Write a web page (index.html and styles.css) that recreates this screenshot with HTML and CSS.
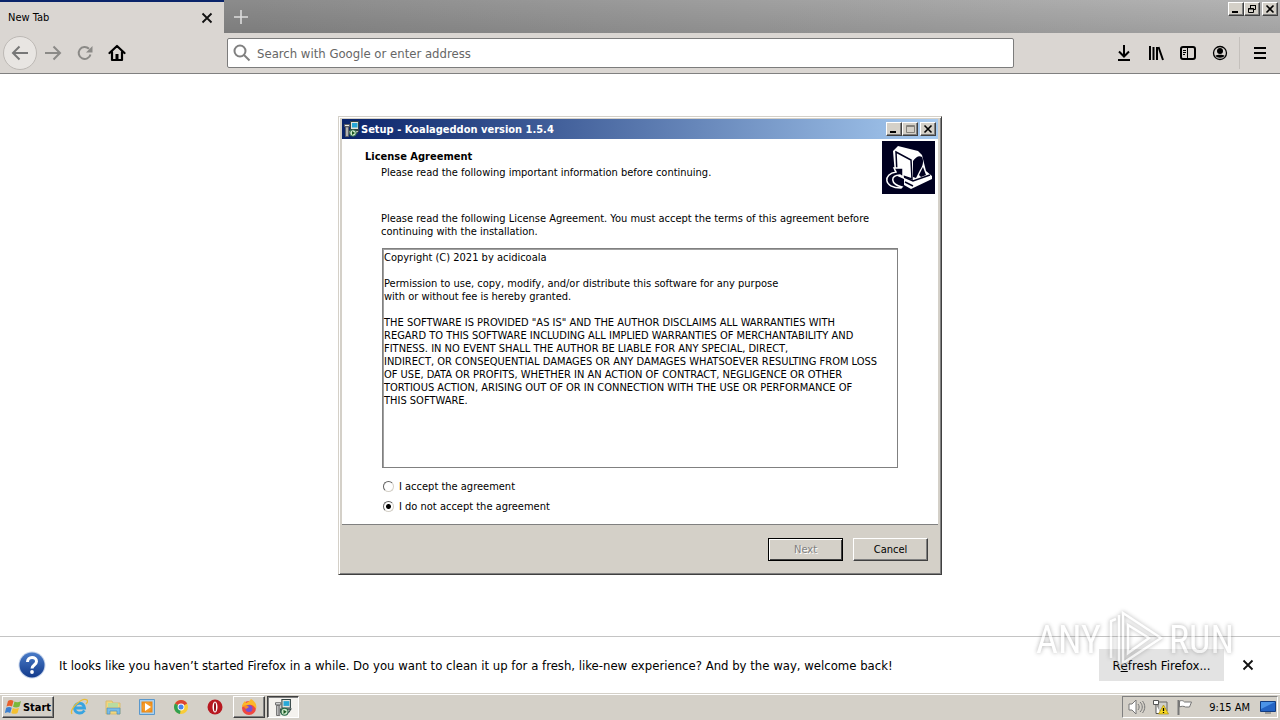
FILE: index.html
```html
<!DOCTYPE html>
<html lang="en">
<head>
  <meta charset="UTF-8" />
  <title>New Tab</title>
  <link rel="stylesheet" href="styles.css">
</head>
<body>

  <!-- shared drawings -->
  <svg class="defs" aria-hidden="true">
    <symbol id="setup-icon" viewBox="0 0 16 16">
      <path d="M6.500 .500h8v8h-8z" fill="#e4e4dc" stroke="#344"/>
      <path d="M8 2h5.500v4.500H8z" fill="#28a8d8"/>
      <path d="M5 9.500h10l-2 3H5z" fill="#d8d8d0" stroke="#344"/>
      <path d="M.5 3.500h5v2h-5zM1.500 6h3v9.500h-3z" fill="#eee" stroke="#555" stroke-width=".8"/>
      <path d="M3 6v9" stroke="#777"/>
      <circle cx="9" cy="12" r="3.300" fill="#cde8c8" stroke="#264"/>
      <path d="M8 10l3 2-3 2z" fill="#185820"/>
    </symbol>
    <symbol id="close-icon" viewBox="0 0 12 12">
      <path d="M1.500 1.500l9 9M10.500 1.500l-9 9" fill="none" stroke="#111" stroke-width="1.800"/>
    </symbol>
  </svg>

  <div class="browser">
    <div class="tabstrip">
      <div class="tab">
        <span>New Tab</span>
        <button class="icon-btn" aria-label="Close tab"><svg width="12" height="12"><use href="#close-icon"/></svg></button>
      </div>
      <button class="icon-btn new-tab" aria-label="New tab">
        <svg width="14" height="14" viewBox="0 0 14 14"><path d="M7 0v14M0 7h14" stroke="#ddd" stroke-width="1.600"/></svg>
      </button>
      <div class="win-buttons">
        <button class="win-btn" aria-label="Minimize"><svg width="12" height="10" viewBox="0 0 12 10"><path d="M2 7h6v2H2z"/></svg></button>
        <button class="win-btn" aria-label="Restore"><svg width="12" height="10" viewBox="0 0 12 10"><path d="M4.500 4V1.500h5v4H8M4 1.500h6M2.500 4.500h5v4h-5zM2 5h6" fill="none" stroke="#000"/></svg></button>
        <button class="win-btn win-close" aria-label="Close"><svg width="12" height="10" viewBox="0 0 12 10"><path d="M2.500 1.500l7 7M9.500 1.500l-7 7" stroke="#000" stroke-width="1.600"/></svg></button>
      </div>
    </div>

    <div class="toolbar">
      <div class="nav">
        <button class="icon-btn nav-back" aria-label="Back"><svg width="18" height="16" viewBox="0 0 18 16"><path d="M17 8H2M8.500 1.500L2 8l6.500 6.500" fill="none" stroke="#777" stroke-width="2"/></svg></button>
        <button class="icon-btn nav-btn" aria-label="Forward"><svg width="18" height="16" viewBox="0 0 18 16"><path d="M1 8h15M9.500 1.500L16 8l-6.500 6.500" fill="none" stroke="#8b8a87" stroke-width="2"/></svg></button>
        <button class="icon-btn nav-btn" aria-label="Reload"><svg width="16" height="16" viewBox="0 0 16 16"><path d="M13.500 9.500A6 6 0 1 1 12 3.800" fill="none" stroke="#8b8a87" stroke-width="2"/><path d="M15.500 1v6.500H9z" fill="#8b8a87"/></svg></button>
        <button class="icon-btn nav-btn" aria-label="Home"><svg width="18" height="18" viewBox="0 0 18 18"><path d="M1.500 9L9 2l7.500 7M4 8v8h10V8" fill="none" stroke="#000" stroke-width="2.200" stroke-linejoin="round" stroke-linecap="round"/><path d="M7.500 10h3v6h-3z"/></svg></button>
      </div>
      <label class="urlbar">
        <svg width="18" height="18" viewBox="0 0 18 18"><circle cx="7" cy="7" r="5.500" fill="none" stroke="#808080" stroke-width="2"/><path d="M10.500 10.500l6 6" stroke="#808080" stroke-width="2"/></svg>
        <input type="text" placeholder="Search with Google or enter address" aria-label="Search with Google or enter address" />
      </label>
      <div class="tools">
        <button class="icon-btn tool" aria-label="Downloads"><svg width="16" height="16" viewBox="0 0 16 16"><path d="M8 0v11M3 6.500l5 5 5-5M2 15h12" fill="none" stroke="#000" stroke-width="2"/></svg></button>
        <button class="icon-btn tool" aria-label="Library"><svg width="16" height="16" viewBox="0 0 16 16"><path d="M2 1v14M5.500 2v13M9 2v13M10.500 2l4.500 13" fill="none" stroke="#000" stroke-width="2"/></svg></button>
        <button class="icon-btn tool" aria-label="Sidebars"><svg width="16" height="16" viewBox="0 0 16 16"><rect x="1" y="2" width="14" height="12" rx="2" fill="none" stroke="#000" stroke-width="2"/><path d="M7.500 2v12M3 5.500h3M3 7.500h3M3 9.500h2" stroke="#000"/></svg></button>
        <button class="icon-btn tool" aria-label="Account"><svg width="16" height="16" viewBox="0 0 16 16"><circle cx="8" cy="8" r="6.500" fill="none" stroke="#000" stroke-width="1.300"/><circle cx="8" cy="6" r="3"/><path d="M3.500 10.500c2-1 7-1 9 0-1 3-8 3-9 0z"/></svg></button>
        <button class="icon-btn menu" aria-label="Menu"><svg width="12" height="14" viewBox="0 0 12 14"><path d="M0 2h12M0 7h12M0 12h12" stroke="#000" stroke-width="2"/></svg></button>
      </div>
    </div>

    <main class="page"></main>

    <div class="notice">
      <svg width="28" height="28" viewBox="0 0 28 28">
        <defs><linearGradient id="help" x2="0" y2="1"><stop stop-color="#4a7cc8"/><stop offset="1" stop-color="#123a8c"/></linearGradient></defs>
        <circle cx="14" cy="14" r="13.500" fill="#c5d3ea"/><circle cx="14" cy="14" r="12.500" fill="url(#help)"/>
        <path d="M9.500 11c0-6 9-6 9-.5 0 3.500-4.500 3.500-4.500 7" fill="none" stroke="#fff" stroke-width="3"/><circle cx="14" cy="21" r="1.900" fill="#fff"/>
      </svg>
      <p>It looks like you haven’t started Firefox in a while. Do you want to clean it up for a fresh, like-new experience? And by the way, welcome back!</p>
      <button class="refresh">R<u>e</u>fresh Firefox...</button>
      <button class="icon-btn" aria-label="Dismiss"><svg width="12" height="12"><use href="#close-icon"/></svg></button>
    </div>
  </div>

  <div class="taskbar">
    <button class="start">
      <svg width="18" height="16" viewBox="0 0 18 16">
        <path d="M3 2c2-1.500 4-1 5.500 0L7 7.500C5.500 6.500 3.500 6.500 1.500 7.500z" fill="#e8602c"/>
        <path d="M9.500 2.500c2 1 4 1 6.500-.5l-1.500 5.500c-2 1.300-4.500 1.300-6.500.3z" fill="#7ab83c"/>
        <path d="M1.200 8.800c2-1.200 4-1 5.500 0L5.200 14C3.500 13 2 13-.2 14z" fill="#3c80d0"/>
        <path d="M7.800 9c2 1 4 1 6.200-.2L12.500 14c-2 1.300-4.500 1-6.200 0z" fill="#f4c030"/>
      </svg>
      Start
    </button>
    <div class="launch">
      <button class="task" aria-label="Internet Explorer"><svg width="18" height="18" viewBox="0 0 18 18"><path d="M14.500 12.500c-3 4-10 3-10-2.500s9-7 10 0H5" fill="none" stroke="#38a4e0" stroke-width="2.800"/><path d="M2 16C-1 11 12-1 17 2c1 1 0 3-1 4" fill="none" stroke="#e8bc38" stroke-width="1.300"/></svg></button>
      <button class="task" aria-label="Explorer"><svg width="18" height="18" viewBox="0 0 18 18"><path d="M2 3h6l1 2h7v11H2z" fill="#f2d67c" stroke="#d8bc70"/><path d="M4 5h10v4H4z" fill="#b8dca0"/><path d="M3 10h13v6h-3v-3H6v3H3z" fill="#78bce8" stroke="#4c90c0" stroke-width=".7"/></svg></button>
      <button class="task" aria-label="Media Player"><svg width="18" height="18" viewBox="0 0 18 18"><path d="M1.500 1.500h15v15h-15z" fill="#a8d0f0" stroke="#5a98cc"/><path d="M3.500 3.500h11v11h-11z" fill="#ec8a18"/><circle cx="9" cy="9" r="5" fill="#f49a28"/><path d="M7 5l6 4-6 4z" fill="#fff"/></svg></button>
      <button class="task" aria-label="Chrome"><svg width="18" height="18" viewBox="0 0 18 18"><circle cx="9" cy="9" r="7" fill="#f8cc38"/><path d="M9 9L3 5.500a7 7 0 0 1 12.200 0z" fill="#dc4434"/><path d="M9 9L3 5.500A7 7 0 0 0 8 16z" fill="#30a050"/><circle cx="9" cy="9" r="3.400" fill="#fff"/><circle cx="9" cy="9" r="2.500" fill="#4884ec"/></svg></button>
      <button class="task" aria-label="Opera"><svg width="18" height="18" viewBox="0 0 18 18"><circle cx="9" cy="9" r="7.500" fill="#b81820"/><ellipse cx="9" cy="9" rx="2.500" ry="5.500" fill="#fff"/><ellipse cx="9" cy="9" rx="1" ry="4.500" fill="#900c14"/></svg></button>
      <button class="task task-open" aria-label="Firefox"><svg width="18" height="18" viewBox="0 0 18 18"><circle cx="9" cy="10" r="7" fill="#f04840"/><path d="M2 9C2 6 4 4 5 3l1 2c3-1 4-3 5-4 5 3 6 7 5 10-2-4-5-5-8-4z" fill="#fcb828"/><circle cx="9" cy="10.500" r="3.500" fill="#7850d0"/><path d="M3 8c3-1 5 0 6 1l-3 2z" fill="#f88c28"/></svg></button>
      <button class="task task-active" aria-label="Setup"><svg width="17" height="17"><use href="#setup-icon"/></svg></button>
    </div>
    <div class="tray">
      <svg width="18" height="16" viewBox="0 0 18 16"><path d="M1 5h3l4-4v14l-4-4H1z" fill="#fff" stroke="#777"/><path d="M10 5c1.500 2 1.500 4 0 6M12 3c3 3 3 7 0 10M14.500 2c3 4 3 8 0 12" fill="none" stroke="#777"/></svg>
      <svg width="18" height="16" viewBox="0 0 18 16"><path d="M6 3h9v9H6z" fill="#d0d0ca" stroke="#666"/><path d="M1.500 1.500h5v4h-5zM4 5.500v9h5" fill="#fff" stroke="#555"/><path d="M11.500 6l5 9h-10z" fill="#f8d820" stroke="#a88c10" stroke-width=".7"/><path d="M11.500 9v3M11.500 13v1" stroke="#000" stroke-width="1.300"/></svg>
      <svg width="18" height="16" viewBox="0 0 18 16"><path d="M2.500 1v15" stroke="#777" stroke-width="2"/><path d="M3.500 2c3-1 4 0 5 1h7l-2 5h-4c-2-1-4-1-6 0z" fill="#fff" stroke="#777"/></svg>
      <time>9:15 AM</time>
      <svg width="16" height="14" viewBox="0 0 16 14"><path d="M.500 1.500h15v10H.500z" fill="#2464c4" stroke="#123c80"/><path d="M1 2h14L1 9z" fill="#4c94e8"/><path d="M5 13h6" stroke="#666"/></svg>
    </div>
  </div>

  <form class="dialog">
    <div class="titlebar">
      <svg width="16" height="16"><use href="#setup-icon"/></svg>
      <span>Setup - Koalageddon version 1.5.4</span>
      <div class="dialog-buttons">
        <button type="button" class="win-btn" aria-label="Minimize"><svg width="12" height="10" viewBox="0 0 12 10"><path d="M2 7h6v2H2z"/></svg></button>
        <button type="button" class="win-btn" aria-label="Maximize" disabled><svg width="12" height="10" viewBox="0 0 12 10"><path d="M2.500 1.500h8v7h-8zM2 2.500h9" fill="none" stroke="#85827c"/></svg></button>
        <button type="button" class="win-btn win-close" aria-label="Close"><svg width="12" height="10" viewBox="0 0 12 10"><path d="M2.500 1.500l7 7M9.500 1.500l-7 7" stroke="#000" stroke-width="1.600"/></svg></button>
      </div>
    </div>
    <div class="dialog-head">
      <div>
        <h1>License Agreement</h1>
        <p>Please read the following important information before continuing.</p>
      </div>
      <svg width="53" height="53" viewBox="0 0 53 53">
        <path d="M0 0h53v53H0z" fill="#000020"/>
        <path d="M11 10l5-5 20 5 4 4 4 16 6 5v3L29 48l-7-4v-6l-9-4z" fill="#fff"/>
        <path d="M14 11l15 8 1 19-15-5z" fill="#fff" stroke="#000020" stroke-width="1.500"/>
        <path d="M31 20c3-4 6-6 9-4 2 4 1 9-2 13l-4 8-3-1z" fill="#000020"/>
        <path d="M37 34l4-8 3 8-5 2z" fill="#000020"/>
        <path d="M22 36l9 4 17-6M23 41l8 4" fill="none" stroke="#000020" stroke-width="1.500"/>
        <path d="M19 47C1 47 1 33 14 31l-2-4h9v9l-3-2c-10 0-10 9 2 12z" fill="#000020" stroke="#fff" stroke-width="1.500"/>
      </svg>
    </div>
    <div class="dialog-body">
      <label for="license">Please read the following License Agreement. You must accept the terms of this agreement before continuing with the installation.</label>
      <textarea id="license" readonly>
Copyright (C) 2021 by acidicoala

Permission to use, copy, modify, and/or distribute this software for any purpose
with or without fee is hereby granted.

THE SOFTWARE IS PROVIDED "AS IS" AND THE AUTHOR DISCLAIMS ALL WARRANTIES WITH
REGARD TO THIS SOFTWARE INCLUDING ALL IMPLIED WARRANTIES OF MERCHANTABILITY AND
FITNESS. IN NO EVENT SHALL THE AUTHOR BE LIABLE FOR ANY SPECIAL, DIRECT,
INDIRECT, OR CONSEQUENTIAL DAMAGES OR ANY DAMAGES WHATSOEVER RESULTING FROM LOSS
OF USE, DATA OR PROFITS, WHETHER IN AN ACTION OF CONTRACT, NEGLIGENCE OR OTHER
TORTIOUS ACTION, ARISING OUT OF OR IN CONNECTION WITH THE USE OR PERFORMANCE OF
THIS SOFTWARE.</textarea>
      <label class="choice"><input type="radio" name="agree" /> I accept the agreement</label>
      <label class="choice"><input type="radio" name="agree" checked /> I do not accept the agreement</label>
    </div>
    <div class="dialog-foot">
      <button type="button" class="push push-default" disabled>Next</button>
      <button type="button" class="push">Cancel</button>
    </div>
  </form>

  <div class="watermark">
    <span>ANY</span>
    <svg width="58" height="64" viewBox="0 0 58 64"><path d="M5 50V13l5-2M13 56V7M17 5l38 25-38 25zM22 17v28l21-15z" fill="none" stroke="#fff" stroke-width="2.500"/></svg>
    <span>RUN</span>
  </div>

</body>
</html>
```

FILE: styles.css
```css
* {
  box-sizing: border-box;
}
body {
  margin: 0;
  min-height: 100vh;
  display: flex;
  flex-direction: column;
  background: #fff;
  color: #000;
  font: 11px/13px Tahoma, "DejaVu Sans Condensed", "Noto Sans", sans-serif;
}
button, input, textarea {
  font: inherit;
  color: inherit;
}
button {
  display: flex;
  align-items: center;
  justify-content: center;
  padding: 0;
}
svg {
  display: block;
  flex: none;
}
p, h1 {
  margin: 0;
}
.defs {
  position: absolute;
  width: 0;
  height: 0;
}
.icon-btn {
  border: none;
  background: none;
}

/* browser window */
.browser {
  flex: 1;
  display: flex;
  flex-direction: column;
}
.tabstrip {
  display: flex;
  height: 33px;
  background: linear-gradient(rgba(0,0,0,0.02), rgba(0,0,0,0.12)), linear-gradient(to right, #8e8e8e 20%, #b8b8b8);
}
.tab {
  width: 224px;
  display: flex;
  align-items: center;
  justify-content: space-between;
  padding: 0 11px 0 8px;
  background: #dad6d2;
  border-top: 2px solid #0a246a;
}
.new-tab {
  width: 34px;
}
.win-buttons {
  display: flex;
  align-items: flex-start;
  margin-left: auto;
  padding: 2px 2px 0 0;
}
.win-btn {
  width: 16px;
  height: 14px;
  background: #d4d0c8;
  border: 1px solid;
  border-color: #fff #404040 #404040 #fff;
  box-shadow: inset -1px -1px #808080;
}
.win-close {
  margin-left: 2px;
}
.toolbar {
  display: flex;
  align-items: center;
  height: 41px;
  background: #dad6d2;
  border-bottom: 1px solid #808080;
}
.nav {
  width: 227px;
  display: flex;
  align-items: center;
  padding-left: 3px;
}
.nav-back {
  width: 34px;
  height: 34px;
  border: 1px solid #bdb9b5;
  border-radius: 50%;
  background: #e8e5e2;
}
.nav-btn {
  width: 32px;
  height: 32px;
}
.urlbar {
  flex: 1;
  display: flex;
  align-items: center;
  gap: 4px;
  height: 30px;
  padding-left: 5px;
  background: #fff;
  border: 1px solid #7c7c7c;
  border-radius: 2px;
}
.urlbar input {
  flex: 1;
  border: none;
  outline: none;
  background: none;
  font-size: 13px;
}
.urlbar input::placeholder {
  color: #666;
}
.tools {
  display: flex;
  align-items: center;
  width: 266px;
  justify-content: flex-end;
}
.tool {
  width: 32px;
  height: 32px;
}
.menu {
  width: 41px;
  height: 32px;
  margin-left: 3px;
  border-left: 1px solid #c4c0bc;
}
.page {
  flex: 1;
}
.notice {
  display: flex;
  align-items: center;
  height: 57px;
  padding: 0 26px 0 18px;
  border-top: 1px solid #c4c4c4;
  font-size: 13px;
}
.notice p {
  flex: 1;
  margin-left: 13px;
}
.refresh {
  width: 125px;
  height: 32px;
  margin-right: 18px;
  border: none;
  background: #e3e3e3;
}

/* taskbar */
.taskbar {
  display: flex;
  align-items: center;
  height: 27px;
  padding: 0 2px;
  background: #d4d0c8;
  border-top: 1px solid #d4d0c8;
  box-shadow: inset 0 1px #fff;
}
.start, .task-open {
  background: #d4d0c8;
  border: 1px solid;
  border-color: #fff #404040 #404040 #fff;
  box-shadow: inset -1px -1px #808080;
}
.start {
  width: 52px;
  height: 22px;
  font-weight: bold;
}
.launch {
  display: flex;
  gap: 2px;
  margin-left: 9px;
}
.task {
  width: 32px;
  height: 22px;
}
.task:not(.task-open):not(.task-active) {
  border: none;
  background: none;
}
.task-active {
  background: #f4f2ee;
  border: 1px solid;
  border-color: #404040 #fff #fff #404040;
  box-shadow: inset 1px 1px #808080;
}
.tray {
  display: flex;
  align-items: center;
  gap: 6px;
  height: 22px;
  margin-left: auto;
  padding: 0 1px 0 5px;
  border: 1px solid;
  border-color: #808080 #fff #fff #808080;
}
.tray time {
  margin: 0 4px 0 9px;
}

/* setup window */
.dialog {
  position: absolute;
  top: 116px;
  left: 0;
  right: 0;
  width: 604px;
  margin: 0 auto;
  padding: 2px;
  background: #d4d0c8;
  border: 1px solid;
  border-color: #d4d0c8 #404040 #404040 #d4d0c8;
  box-shadow: inset 1px 1px #fff, inset -1px -1px #808080;
}
.titlebar {
  display: flex;
  align-items: center;
  gap: 1px;
  height: 20px;
  margin: 0 1px;
  padding: 0 2px;
  background: linear-gradient(to right, #0a246a, #a6caf0);
  color: #fff;
  font-weight: bold;
}
.dialog-buttons {
  display: flex;
  margin-left: auto;
}
.dialog-head {
  display: flex;
  justify-content: space-between;
  height: 59px;
  margin: 0 1px;
  padding: 2px 3px 0 23px;
  background: #fff;
}
.dialog-head h1 {
  margin: 9px 0 3px;
  font: inherit;
  font-weight: bold;
}
.dialog-head p {
  margin-left: 16px;
}
.dialog-body {
  display: flex;
  flex-direction: column;
  margin: 0 1px;
  padding: 14px 40px 8px 39px;
  background: #fff;
  border-bottom: 1px solid #808080;
}
#license {
  height: 220px;
  margin: 10px 0 8px 1px;
  padding: 2px 1px;
  border: 1px solid #808080;
  box-shadow: inset 1px 1px #a0a0a0;
  resize: none;
  outline: none;
  overflow: hidden;
  white-space: pre;
}
.choice {
  display: flex;
  align-items: center;
  gap: 5px;
  height: 20px;
}
.choice input {
  appearance: none;
  width: 11px;
  height: 11px;
  margin: 0 0 0 2px;
  border: 1px solid;
  border-color: #606060 #d4d0c8 #d4d0c8 #606060;
  border-radius: 50%;
}
.choice input:checked {
  background: radial-gradient(circle, #000 2px, #fff 3px);
}
.dialog-foot {
  display: flex;
  gap: 10px;
  justify-content: flex-end;
  padding: 13px 11px 11px;
}
.push {
  width: 75px;
  height: 23px;
  background: #d4d0c8;
  border: 1px solid;
  border-color: #fff #404040 #404040 #fff;
  box-shadow: inset -1px -1px #808080;
}
.push-default {
  border-color: #000;
  box-shadow: inset 1px 1px #fff, inset -1px -1px #404040;
}
.push:disabled {
  color: #808080;
  text-shadow: 1px 1px #fff;
}

/* logo laid over the corner */
.watermark {
  position: absolute;
  right: 46px;
  bottom: 48px;
  display: flex;
  align-items: center;
  gap: 5px;
  color: #fff;
  font: 38px/38px "Roboto Condensed", "Liberation Sans Narrow", sans-serif;
  opacity: 0.6;
  filter: drop-shadow(0 0 2px #777);
  pointer-events: none;
}
```
